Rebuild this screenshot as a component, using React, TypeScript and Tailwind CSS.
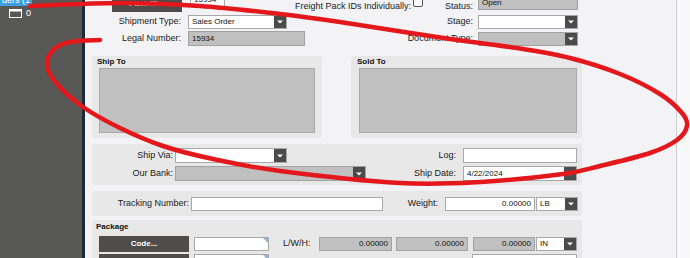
import React from "react";

// freehand red marker drawn over the screen
const stroke: number[][] = [
  [30, 6], [120, 3], [200, 6], [280, 14], [340, 22], [450, 39], [517, 48], [570, 58],
  [620, 74], [660, 94], [682, 113], [687, 126], [677, 140], [650, 153], [600, 166],
  [563, 174], [480, 182], [400, 183], [280, 171], [213, 159], [163, 146], [120, 128],
  [83, 107], [57, 84], [47, 66], [53, 50], [70, 42], [100, 40],
];

function smooth(pts: number[][]) {
  let d = `M${pts[0][0]} ${pts[0][1]}`;
  for (let i = 0; i < pts.length - 1; i++) {
    const p0 = pts[i - 1] || pts[i];
    const p1 = pts[i];
    const p2 = pts[i + 1];
    const p3 = pts[i + 2] || p2;
    const c1x = p1[0] + (p2[0] - p0[0]) / 6;
    const c1y = p1[1] + (p2[1] - p0[1]) / 6;
    const c2x = p2[0] - (p3[0] - p1[0]) / 6;
    const c2y = p2[1] - (p3[1] - p1[1]) / 6;
    d += ` C${c1x} ${c1y} ${c2x} ${c2y} ${p2[0]} ${p2[1]}`;
  }
  return d;
}

function DropBtn() {
  return (
    <div className="flex w-[12px] shrink-0 items-center justify-center bg-[#4b4b4b]">
      <svg width="6" height="4" viewBox="0 0 6 4">
        <path d="M0 0.5H6L3 3.5Z" fill="#fff" />
      </svg>
    </div>
  );
}

function Box({ className = "", gray = false, right = false, children }: { className?: string; gray?: boolean; right?: boolean; children?: React.ReactNode }) {
  return (
    <div
      className={`flex shrink-0 items-center overflow-hidden whitespace-nowrap border px-[3px] text-[8px] text-[#111] ${
        gray ? "border-[#a2a2a2] bg-[#c0c0c0]" : "border-[#a8a8a8] bg-white"
      } ${right ? "justify-end" : ""} ${className}`}
    >
      {children}
    </div>
  );
}

function Select({ className = "", gray = false, value = "" }: { className?: string; gray?: boolean; value?: string }) {
  return (
    <div className={`flex shrink-0 border ${gray ? "border-[#a2a2a2] bg-[#c0c0c0]" : "border-[#a8a8a8] bg-white"} ${className}`}>
      <div className="flex flex-1 items-center px-[3px] text-[8px] text-[#111]">{value}</div>
      <DropBtn />
    </div>
  );
}

function Label({ className = "", children }: { className?: string; children: React.ReactNode }) {
  return <span className={`flex shrink-0 justify-end whitespace-nowrap text-[9px] text-[#1a1a1a] ${className}`}>{children}</span>;
}

function NoteField() {
  return (
    <div className="relative ml-[5px] h-[14px] w-[75px] shrink-0 border border-[#a8a8a8] bg-white">
      <svg className="absolute right-0 top-0" width="5" height="5" viewBox="0 0 5 5">
        <path d="M0 0H5V5Z" fill="#8db6de" />
      </svg>
    </div>
  );
}

export default function App() {
  return (
    <div className="relative flex h-[258px] w-[690px] overflow-hidden bg-[#f3f3f5] font-['Liberation_Sans',Arial,sans-serif]">
      {/* sidebar */}
      <div className="flex w-[82px] shrink-0 flex-col bg-[#585856]">
        <div className="h-[6px] w-[32px] overflow-hidden bg-[#3d9fe0] pl-[2px]">
          <div className="-mt-[5px] text-[9px] leading-[10px] text-white">ders (1</div>
        </div>
        <div className="mt-[3px] flex items-center pl-[9px]">
          <svg width="13" height="9" viewBox="0 0 13 9">
            <rect x="0.5" y="0.5" width="12" height="8" fill="none" stroke="#fff" />
            <rect x="0.5" y="0.5" width="12" height="2" fill="#fff" />
          </svg>
          <span className="ml-[4px] text-[9px] leading-[9px] text-white">0</span>
        </div>
      </div>
      <div className="w-[3px] shrink-0 bg-[#1c2b39]" />

      {/* main form */}
      <div className="flex w-[591px] shrink-0 flex-col pl-[1px]">
        <div className="-mt-[4px] flex shrink-0 flex-col">
          <div className="flex h-[16px]">
            <div className="flex w-[337px]">
              <div className="ml-[26px] flex w-[70px] items-center justify-center bg-[#4e4d4b] text-[8px] font-bold text-white">Pack ID...</div>
              <Box className="-mt-[3px] ml-[8px] h-[14px] w-[35px]">15934</Box>
              <Label className="ml-auto mt-[2px] leading-[16px]">Freight Pack IDs Individually:</Label>
              <div className="ml-[2px] mt-[1px] h-[10px] w-[10px] rounded-[2px] border border-[#555] bg-white" />
            </div>
            <Label className="mt-[2px] w-[50px] leading-[16px]">Status:</Label>
            <Box gray className="-mt-[1px] ml-[5px] h-[15px] w-[100px]">Open</Box>
          </div>

          <div className="mt-[2px] flex h-[15px] items-center">
            <div className="flex w-[337px] items-center">
              <Label className="w-[95px]">Shipment Type:</Label>
              <Select className="ml-[7px] h-[14px] w-[99px]" value="Sales Order" />
            </div>
            <Label className="w-[50px]">Stage:</Label>
            <Select className="ml-[5px] h-[14px] w-[100px]" />
          </div>

          <div className="mt-[2px] flex h-[15px] items-center">
            <div className="flex w-[337px] items-center">
              <Label className="w-[95px]">Legal Number:</Label>
              <Box gray className="ml-[7px] h-[15px] w-[117px]">15934</Box>
            </div>
            <Label className="w-[50px]">Document Type:</Label>
            <Select gray className="ml-[5px] h-[14px] w-[100px]" />
          </div>
        </div>

        {/* address panels */}
        <div className="mt-[10px] flex shrink-0 gap-[29px] pl-[6px]">
          <div className="flex h-[82px] w-[230px] flex-col rounded-[3px] bg-[#e8e8e8] px-[7px]">
            <div className="-ml-[2px] h-[12px] shrink-0 pt-[1px] text-[8px] font-bold leading-[10px] text-[#111]">Ship To</div>
            <div className="h-[65px] shrink-0 border border-[#a9a9a9] bg-[#c0c0c0]" />
          </div>
          <div className="flex h-[82px] w-[231px] flex-col rounded-[3px] bg-[#e8e8e8] pl-[8px] pr-[5px]">
            <div className="-ml-[2px] h-[12px] shrink-0 pt-[1px] text-[8px] font-bold leading-[10px] text-[#111]">Sold To</div>
            <div className="h-[65px] shrink-0 border border-[#a9a9a9] bg-[#c0c0c0]" />
          </div>
        </div>

        {/* ship via */}
        <div className="ml-[6px] mt-[6px] flex h-[41px] w-[490px] shrink-0 flex-col gap-[3px] rounded-[3px] bg-[#e8e8e8] pt-[4px]">
          <div className="flex h-[15px] items-center">
            <div className="flex w-[317px] items-center">
              <Label className="w-[81px]">Ship Via:</Label>
              <Select className="ml-[2px] h-[15px] w-[112px]" />
            </div>
            <Label className="w-[47px]">Log:</Label>
            <Box className="ml-[7px] h-[15px] w-[114px]" />
          </div>
          <div className="flex h-[15px] items-center">
            <div className="flex w-[317px] items-center">
              <Label className="w-[81px]">Our Bank:</Label>
              <Select gray className="ml-[2px] h-[15px] w-[191px]" />
            </div>
            <Label className="w-[47px]">Ship Date:</Label>
            <Select className="ml-[7px] h-[15px] w-[114px]" value="4/22/2024" />
          </div>
        </div>

        {/* tracking */}
        <div className="ml-[6px] mt-[6px] flex h-[25px] w-[490px] shrink-0 items-center rounded-[3px] bg-[#e8e8e8]">
          <Label className="w-[97px]">Tracking Number:</Label>
          <Box className="ml-[2px] h-[14px] w-[192px]" />
          <Label className="w-[55px]">Weight:</Label>
          <Box right className="ml-[7px] h-[14px] w-[90px]">0.00000</Box>
          <Select className="ml-[1px] h-[14px] w-[42px]" value="LB" />
        </div>

        {/* package */}
        <div className="ml-[6px] mt-[4px] flex h-[60px] w-[490px] shrink-0 flex-col rounded-[3px] bg-[#e8e8e8]">
          <div className="shrink-0 pl-[4px] pt-[2px] text-[8px] font-bold leading-[10px] text-[#111]">Package</div>
          <div className="mt-[4px] flex h-[16px] shrink-0 items-center">
            <div className="ml-[7px] flex h-[16px] w-[90px] shrink-0 items-center justify-center bg-[#4e4d4b] text-[8px] font-bold text-white">Code...</div>
            <NoteField />
            <Label className="ml-[14px] w-[30px] justify-start">L/W/H:</Label>
            <Box gray right className="ml-[6px] h-[14px] w-[73px]">0.00000</Box>
            <Box gray right className="ml-[4px] h-[14px] w-[72px]">0.00000</Box>
            <Box gray right className="ml-[5px] h-[14px] w-[62px]">0.00000</Box>
            <Select className="ml-[1px] h-[14px] w-[41px]" value="IN" />
          </div>
          <div className="mt-[2px] flex h-[16px] shrink-0">
            <div className="ml-[7px] h-[16px] w-[90px] shrink-0 bg-[#4e4d4b]" />
            <NoteField />
            <Box className="ml-[203px] h-[14px] w-[105px]" />
          </div>
        </div>
      </div>

      {/* scroll edge */}
      <div className="flex-1 border-l border-[#cdcdcf] bg-[#f8f8f9]" />

      <svg className="pointer-events-none absolute inset-0" width="690" height="258" viewBox="0 0 690 258">
        <path d={smooth(stroke)} fill="none" stroke="#e3171c" strokeWidth="4.5" strokeLinecap="round" strokeLinejoin="round" />
      </svg>
    </div>
  );
}
